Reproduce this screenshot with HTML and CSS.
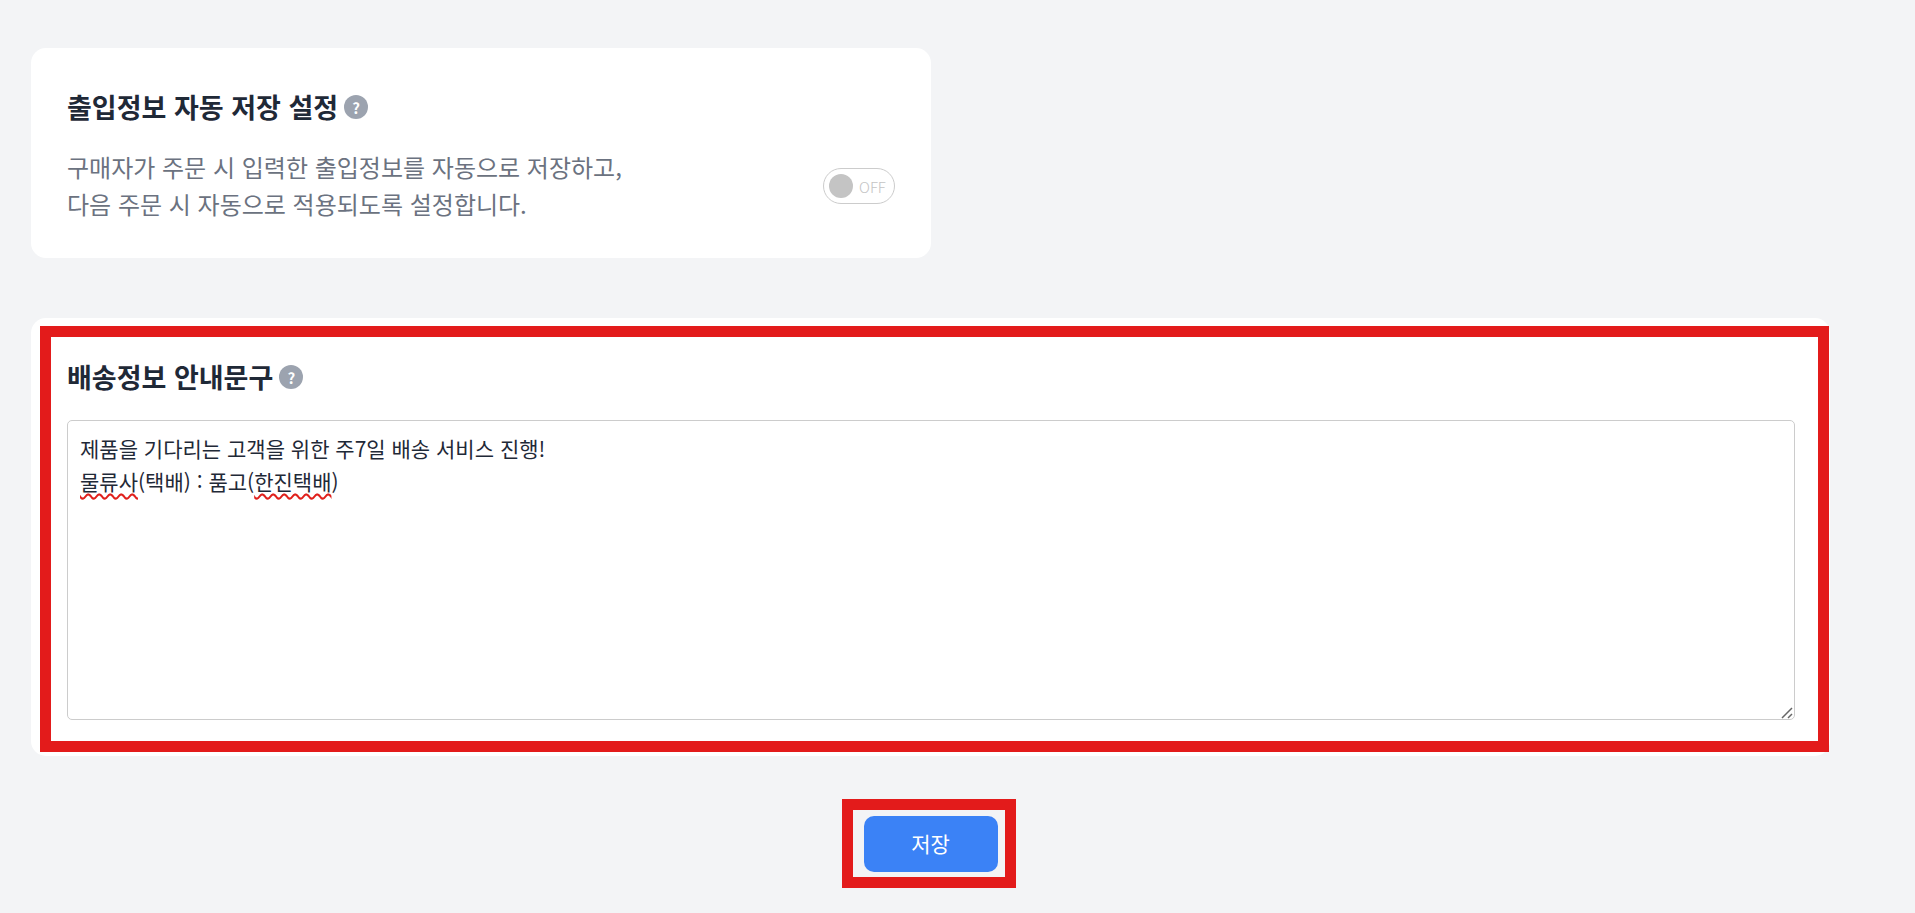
FILE: index.html
```html
<!DOCTYPE html>
<html lang="ko">
<head>
  <meta charset="utf-8">
  <title>배송 설정</title>
  <link rel="stylesheet" href="styles.css">
</head>
<body>
  <div class="container">
    <section class="card card-small">
      <h2 class="card-title">
        출입정보 자동 저장 설정
        <span class="help">?</span>
      </h2>
      <div class="setting-row">
        <p class="setting-desc">구매자가 주문 시 입력한 출입정보를 자동으로 저장하고,<br>다음 주문 시 자동으로 적용되도록 설정합니다.</p>
        <div class="toggle">
          <span class="toggle-knob"></span>
          <span class="toggle-label">OFF</span>
        </div>
      </div>
    </section>

    <section class="card card-wide">
      <div class="mark mark-card"></div>
      <h2 class="card-title">
        배송정보 안내문구
        <span class="help">?</span>
      </h2>
      <div class="textbox">제품을 기다리는 고객을 위한 주7일 배송 서비스 진행!<br><span class="typo">물류사</span>(택배) : 품고(<span class="typo">한진택배</span>)
        <svg class="grip" width="12" height="12" viewBox="0 0 12 12">
          <path d="M1 11 L11 1 M7 11 L11 7" stroke="#666" stroke-width="1.5" fill="none"/>
        </svg>
      </div>
    </section>

    <div class="actions">
      <div class="save-wrap">
        <div class="mark mark-save"></div>
        <button class="btn-save" type="button">저장</button>
      </div>
    </div>
  </div>
</body>
</html>
```

FILE: styles.css
```css
* {
  box-sizing: border-box;
}

body {
  margin: 0;
  background: #f3f4f6;
  font-family: "Noto Sans CJK KR", "Noto Sans", sans-serif;
  color: #1f2937;
}

.container {
  width: 1915px;
  height: 913px;
  overflow: hidden;
  padding: 48px 85px 0 31px;
}

.card {
  position: relative;
  background: #fff;
  border-radius: 15px;
  padding: 36px 35px 36px 36px;
}

.card-small {
  width: 900px;
  height: 210px;
  padding-top: 40px;
  padding-right: 36px;
}

.card-wide {
  height: 438px;
  margin-top: 60px;
  padding-top: 40px;
}

.card-title {
  display: flex;
  align-items: center;
  gap: 6px;
  margin: 0;
  height: 38px;
  font-size: 27px;
  font-weight: 700;
  line-height: 38px;
}

.help {
  display: flex;
  align-items: center;
  justify-content: center;
  width: 24px;
  height: 24px;
  border-radius: 50%;
  background: #9ca3af;
  color: #fff;
  font-size: 15px;
  font-weight: 700;
  line-height: 1;
}

.setting-row {
  display: flex;
  align-items: center;
  justify-content: space-between;
  margin-top: 22px;
}

.setting-desc {
  margin: 0;
  font-size: 24px;
  line-height: 37px;
  color: #6b7280;
}

.toggle {
  display: flex;
  align-items: center;
  gap: 6px;
  width: 72px;
  height: 36px;
  margin-top: 2px;
  padding-left: 5px;
  border: 1px solid #ccc;
  border-radius: 18px;
}

.toggle-knob {
  width: 24px;
  height: 24px;
  border-radius: 50%;
  background: #c4c4c4;
}

.toggle-label {
  font-size: 15px;
  font-weight: 300;
  color: #c4c4c4;
}

.textbox {
  position: relative;
  height: 300px;
  margin-top: 24px;
  padding: 11px 12px;
  border: 1px solid #ccc;
  border-radius: 5px;
  font-size: 21px;
  line-height: 33px;
}

.typo {
  text-decoration: underline wavy #e0201c;
  text-decoration-skip-ink: none;
  text-underline-offset: 3px;
}

/* textarea resize handle */
.grip {
  position: absolute;
  right: 1px;
  bottom: 0;
}

.actions {
  display: flex;
  justify-content: center;
  width: 1799px;
  margin-top: 60px;
}

.save-wrap {
  position: relative;
}

.btn-save {
  display: block;
  width: 134px;
  height: 56px;
  padding: 0 0 2px;
  border: 0;
  border-radius: 10px;
  background: #3b82f6;
  color: #fff;
  font-family: inherit;
  font-size: 21px;
}

/* red annotation boxes drawn on top of the screenshot */
.mark {
  position: absolute;
  border: 11px solid #e31b1b;
  pointer-events: none;
}

.mark-card {
  top: 8px;
  left: 9px;
  right: 1px;
  bottom: 4px;
}

.mark-save {
  top: -17px;
  left: -22px;
  right: -18px;
  bottom: -16px;
}
```
